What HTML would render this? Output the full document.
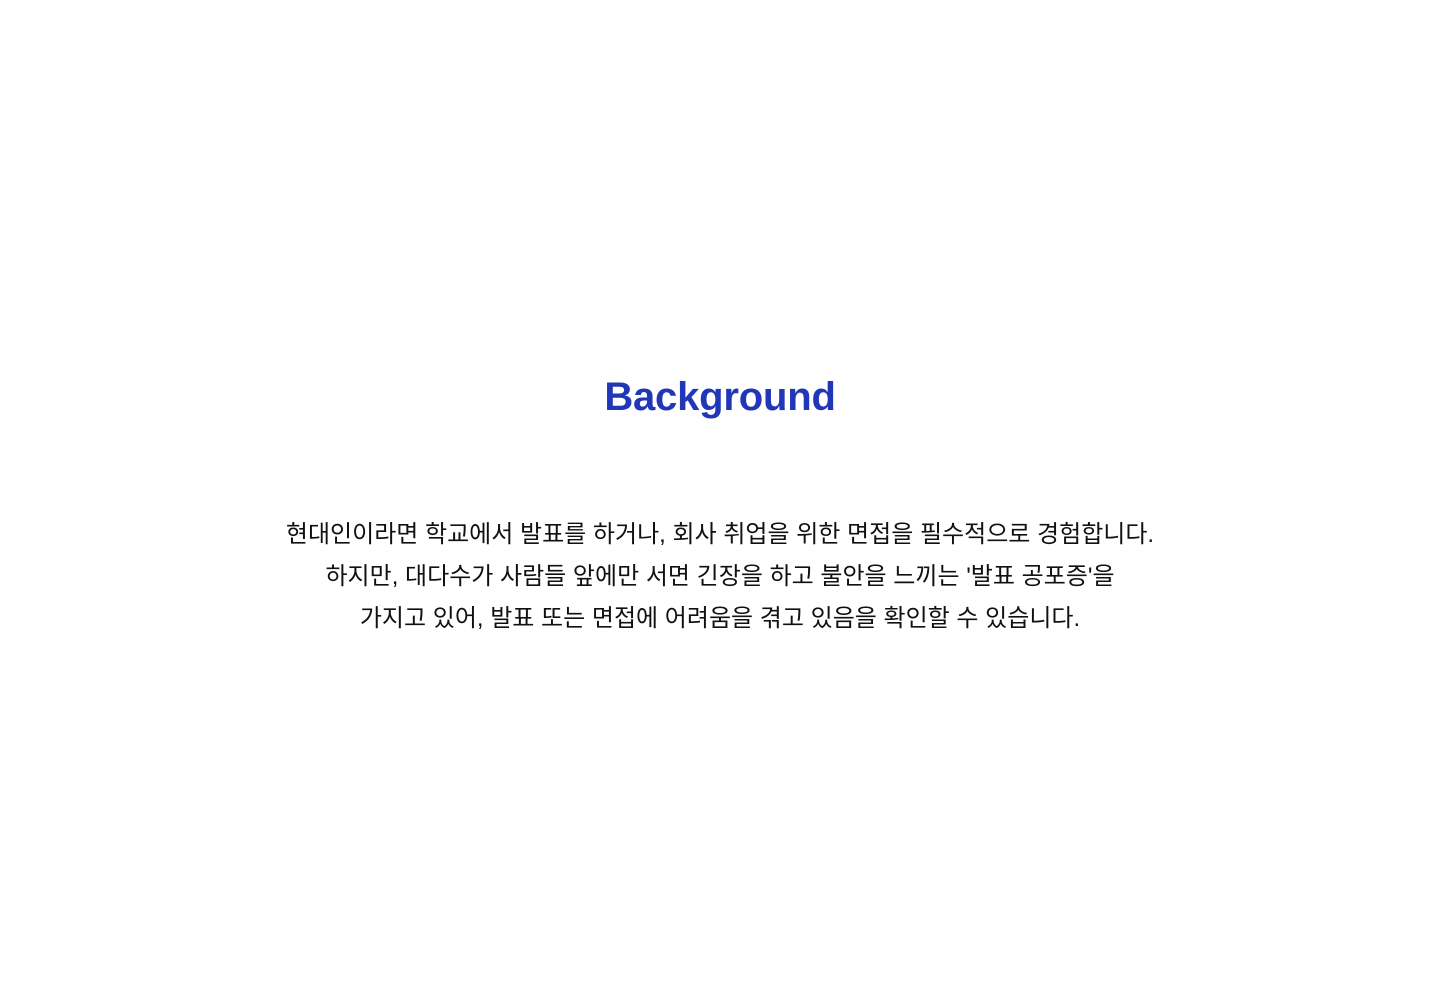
<!DOCTYPE html>
<html><head><meta charset="utf-8"><style>
html,body{margin:0;padding:0;background:#fff;width:1440px;height:1000px;overflow:hidden}
h1{position:absolute;top:371px;left:0;width:1440px;margin:0;text-align:center;font-family:"Liberation Sans",sans-serif;font-weight:700;font-size:40px;line-height:52px;color:#2137b8;letter-spacing:-0.2px}
p{position:absolute;top:514px;left:0;width:1440px;margin:0;text-align:center;font-family:"Liberation Sans","Noto Sans CJK KR",sans-serif;font-size:24px;line-height:42px;color:#111;letter-spacing:0}
</style></head><body>
<h1>Background</h1>
<p>현대인이라면 학교에서 발표를 하거나, 회사 취업을 위한 면접을 필수적으로 경험합니다.<br>하지만, 대다수가 사람들 앞에만 서면 긴장을 하고 불안을 느끼는 '발표 공포증'을<br>가지고 있어, 발표 또는 면접에 어려움을 겪고 있음을 확인할 수 있습니다.</p>
</body></html>
